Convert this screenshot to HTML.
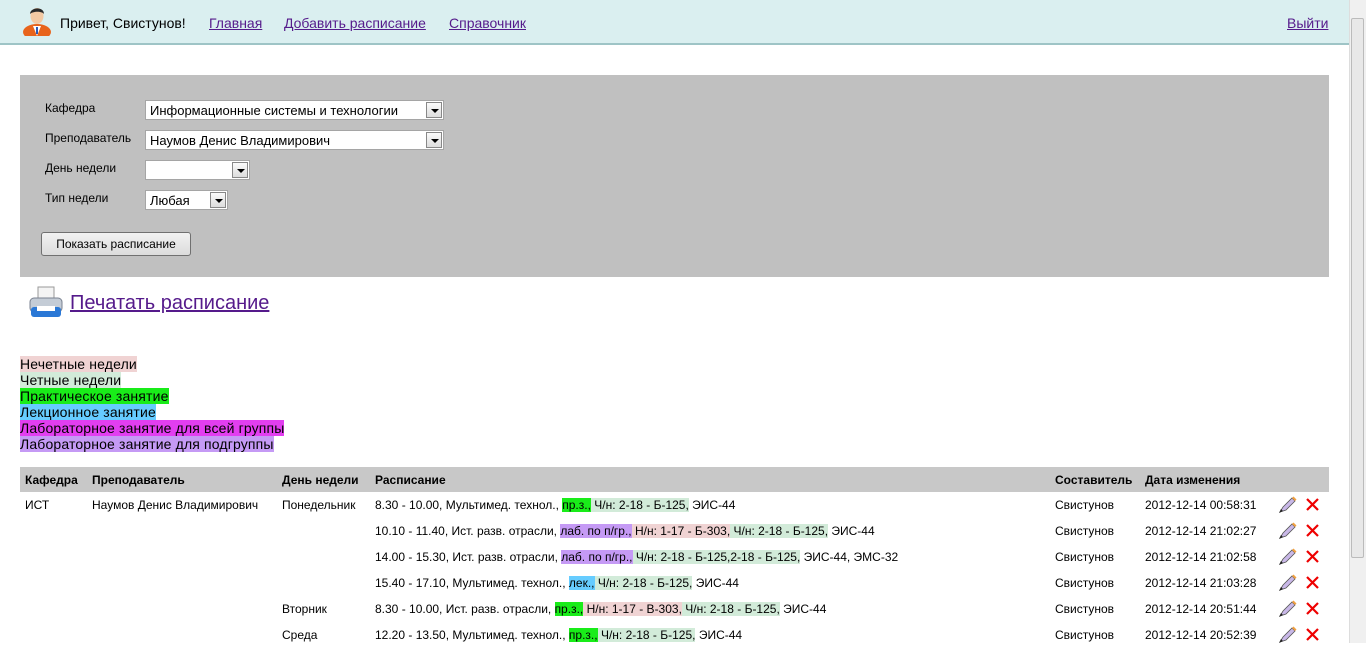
<!DOCTYPE html>
<html><head><meta charset="utf-8"><style>
*{margin:0;padding:0;box-sizing:border-box}
body{width:1366px;height:643px;overflow:hidden;font-family:"Liberation Sans",Arial,sans-serif;background:#fff;position:relative;color:#000}
.a{position:absolute;white-space:nowrap}
a{color:#551a8b;text-decoration:underline}
#hdr{left:0;top:0;width:1349px;height:45px;background:#daeff0;border-bottom:2px solid #9ec4c6}
#sb{left:1349px;top:0;width:17px;height:643px;background:#f0f0f0;border-left:1px solid #ddd}
#thumb{left:1351px;top:18px;width:13px;height:540px;background:#e8e8e8;border:1px solid #bbb;border-radius:2px}
#panel{left:20px;top:75px;width:1309px;height:202px;background:#c0c0c0}
.lbl{font-size:12px}
.sel{background:#fff;border:1px solid #a5a5a5;height:20px;font-size:13px;padding:2px 4px}
.sel i{position:absolute;right:1px;top:1px;width:16px;height:16px;border:1px solid #888;background:linear-gradient(#fafafa,#ddd)}
.sel i:after{content:"";position:absolute;left:4px;top:6px;border-left:4px solid transparent;border-right:4px solid transparent;border-top:4px solid #000}
.btn{left:41px;top:232px;width:150px;height:24px;border:1px solid #707070;border-radius:3px;background:linear-gradient(#f2f2f2,#dcdcdc);font-size:12px;text-align:center;line-height:22px}
.lg{font-size:14px;line-height:16px;letter-spacing:0.15px}
#th{left:20px;top:467px;width:1309px;height:25px;background:#c8c8c8}
.t{font-size:12px}
.h{font-weight:bold;top:473px}
.g{background:#d2ebd9}.p{background:#f0d3d3}.pr{background:#19ec19}.le{background:#66ccff}.lp{background:#c59af5}
</style></head><body>
<div class="a" id="hdr"></div>
<svg class="a" style="left:22px;top:4px" width="30" height="32" viewBox="0 0 30 32"><ellipse cx="15" cy="28" rx="14" ry="8" fill="#e8641c"/><path d="M11 22h8l-4 10z" fill="#fff"/><rect x="14" y="23" width="2" height="7" fill="#2a5ab8"/><ellipse cx="15" cy="12" rx="6.5" ry="8" fill="#f3c9a3"/><path d="M8 10c0-7 14-8 14 0c-2-3-11-3-14 0z" fill="#2a2a2a"/></svg>
<div class="a" style="left:60px;top:15px;font-size:14px">Привет, Свистунов!</div>
<a class="a" style="left:209px;top:15px;font-size:14px">Главная</a>
<a class="a" style="left:284px;top:15px;font-size:14px">Добавить расписание</a>
<a class="a" style="left:449px;top:15px;font-size:14px">Справочник</a>
<a class="a" style="left:1287px;top:15px;font-size:14px">Выйти</a>
<div class="a" id="sb"></div><div class="a" id="thumb"></div>
<div class="a" id="panel"></div>
<div class="a lbl" style="left:45px;top:101px">Кафедра</div>
<div class="a lbl" style="left:45px;top:131px">Преподаватель</div>
<div class="a lbl" style="left:45px;top:161px">День недели</div>
<div class="a lbl" style="left:45px;top:191px">Тип недели</div>
<div class="a sel" style="left:145px;top:100px;width:299px">Информационные системы и технологии<i></i></div>
<div class="a sel" style="left:145px;top:130px;width:299px">Наумов Денис Владимирович<i></i></div>
<div class="a sel" style="left:145px;top:160px;width:105px"><i></i></div>
<div class="a sel" style="left:145px;top:190px;width:83px">Любая<i></i></div>
<div class="a btn">Показать расписание</div>
<svg class="a" style="left:28px;top:285px" width="36" height="36" viewBox="0 0 36 36"><rect x="10" y="2" width="16" height="14" fill="#f4f4f4" stroke="#999"/><rect x="2" y="13" width="32" height="14" rx="4" fill="#c4ccd6" stroke="#7a8290"/><rect x="3" y="22" width="30" height="10" rx="3" fill="#2a78d6"/><rect x="9" y="21" width="18" height="5" fill="#fff"/></svg>
<a class="a" style="left:70px;top:292px;font-size:20px">Печатать расписание</a>
<div class="a lg" style="left:20px;top:356px"><span class="p">Нечетные недели</span><br><span class="g">Четные недели</span><br><span class="pr">Практическое занятие</span><br><span class="le">Лекционное занятие</span><br><span style="background:#e23ef0">Лабораторное занятие для всей группы</span><br><span class="lp">Лабораторное занятие для подгруппы</span></div>
<div class="a" id="th"></div>
<div class="a t h" style="left:25px">Кафедра</div>
<div class="a t h" style="left:92px">Преподаватель</div>
<div class="a t h" style="left:282px">День недели</div>
<div class="a t h" style="left:375px">Расписание</div>
<div class="a t h" style="left:1055px">Составитель</div>
<div class="a t h" style="left:1145px">Дата изменения</div>
<div class="a t" style="left:25px;top:498px">ИСТ</div>
<div class="a t" style="left:92px;top:498px">Наумов Денис Владимирович</div>
<div class="a t" style="left:282px;top:498px">Понедельник</div>
<div class="a t" style="left:282px;top:602px">Вторник</div>
<div class="a t" style="left:282px;top:628px">Среда</div>
<div class="a t" style="left:375px;top:498px">8.30 - 10.00, Мультимед. технол., <span class="pr">пр.з.,</span><span class="g"> Ч/н: 2-18 - Б-125,</span> ЭИС-44</div>
<div class="a t" style="left:375px;top:524px">10.10 - 11.40, Ист. разв. отрасли, <span class="lp">лаб. по п/гр.,</span><span class="p"> Н/н: 1-17 - Б-303,</span><span class="g"> Ч/н: 2-18 - Б-125,</span> ЭИС-44</div>
<div class="a t" style="left:375px;top:550px">14.00 - 15.30, Ист. разв. отрасли, <span class="lp">лаб. по п/гр.,</span><span class="g"> Ч/н: 2-18 - Б-125,2-18 - Б-125,</span> ЭИС-44, ЭМС-32</div>
<div class="a t" style="left:375px;top:576px">15.40 - 17.10, Мультимед. технол., <span class="le">лек.,</span><span class="g"> Ч/н: 2-18 - Б-125,</span> ЭИС-44</div>
<div class="a t" style="left:375px;top:602px">8.30 - 10.00, Ист. разв. отрасли, <span class="pr">пр.з.,</span><span class="p"> Н/н: 1-17 - В-303,</span><span class="g"> Ч/н: 2-18 - Б-125,</span> ЭИС-44</div>
<div class="a t" style="left:375px;top:628px">12.20 - 13.50, Мультимед. технол., <span class="pr">пр.з.,</span><span class="g"> Ч/н: 2-18 - Б-125,</span> ЭИС-44</div>
<div class="a t" style="left:1055px;top:492px;line-height:26px">Свистунов<br>Свистунов<br>Свистунов<br>Свистунов<br>Свистунов<br>Свистунов</div>
<div class="a t" style="left:1145px;top:492px;line-height:26px">2012-12-14 00:58:31<br>2012-12-14 21:02:27<br>2012-12-14 21:02:58<br>2012-12-14 21:03:28<br>2012-12-14 20:51:44<br>2012-12-14 20:52:39</div>
<svg class="a" style="left:1278px;top:496px" width="50" height="150">
<defs><g id="r"><path d="M2 16l3-5 9-9 3 3-9 9z" fill="#c9b8e8" stroke="#555" stroke-width=".8"/><path d="M14 2l3 3 1.5-1.5-3-3z" fill="#f0a040"/><path d="M1 17l2-4 2 2z" fill="#222"/><path d="M29 3l11 11M40 3L29 14" stroke="#e00" stroke-width="2.2"/></g></defs>
<use href="#r" y="0"/><use href="#r" y="26"/><use href="#r" y="52"/><use href="#r" y="78"/><use href="#r" y="104"/><use href="#r" y="130"/></svg>
</body></html>
